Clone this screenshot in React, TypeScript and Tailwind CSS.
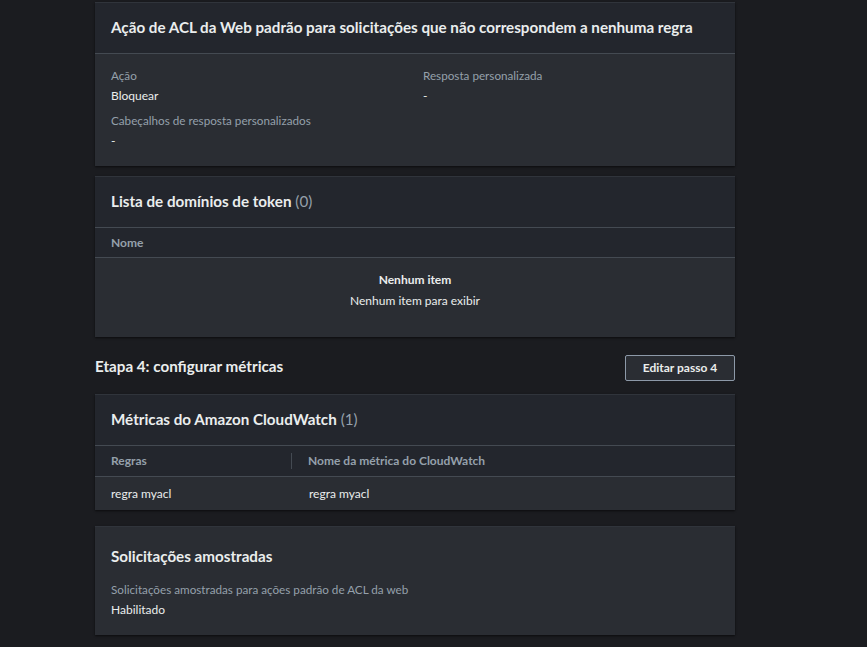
import React from "react";

/* ===============================
   SMALL PIECES
=============================== */
function Card({ children }: { children: React.ReactNode }) {
  return (
    <section className="bg-[#2a2d33] shadow-[0_1px_2px_rgba(0,0,0,0.6)] border-t border-[#30343b]">
      {children}
    </section>
  );
}

function CardHeader({ title, count }: { title: string; count?: number }) {
  return (
    <header className="bg-[#23262d] px-4 h-[51px] flex items-center pb-[2px] border-b border-[#444a52]">
      <h2 className="text-[15.2px] font-bold text-[#eaeded]">
        {title}
        {count !== undefined && (
          <span className="font-normal text-[#95a0ab]"> ({count})</span>
        )}
      </h2>
    </header>
  );
}

function Field({ label, value }: { label: string; value: string }) {
  return (
    <div className="flex flex-col">
      <span className="text-[11.7px] leading-5 text-[#95a0ab]">{label}</span>
      <span className="text-[12px] leading-5 text-[#eaeded] mt-[1px]">{value}</span>
    </div>
  );
}

export default function App() {
  return (
    <main
      className="min-h-screen bg-[#1b1c20] pb-3"
      style={{ fontFamily: 'Lato, "Noto Sans", Arial, sans-serif' }}
    >
      <div className="w-[640px] ml-[95px] pt-[2px] flex flex-col">
        {/* ================= DEFAULT ACTION ================= */}
        <Card>
          <CardHeader title="Ação de ACL da Web padrão para solicitações que não correspondem a nenhuma regra" />
          <div className="px-4 pt-[11px] pb-[15px] grid grid-cols-2 gap-x-4">
            <div className="flex flex-col gap-[4px]">
              <Field label="Ação" value="Bloquear" />
              <Field label="Cabeçalhos de resposta personalizados" value="-" />
            </div>
            <div>
              <Field label="Resposta personalizada" value="-" />
            </div>
          </div>
        </Card>

        {/* ================= TOKEN DOMAINS ================= */}
        <div className="mt-[10px]">
          <Card>
            <CardHeader title="Lista de domínios de token" count={0} />
            <div className="px-4 h-[30px] flex items-center bg-[#23262d] border-b border-[#444a52]">
              <span className="text-[12px] font-bold text-[#95a0ab]">Nome</span>
            </div>
            <div className="flex flex-col items-center pt-[12px] pb-[26px] text-[12px] text-[#eaeded]">
              <span className="font-bold leading-5">Nenhum item</span>
              <span className="leading-5 mt-[1px]">Nenhum item para exibir</span>
            </div>
          </Card>
        </div>

        {/* ================= STEP 4 ================= */}
        <div className="flex items-center justify-between mt-[18px] mb-[13px]">
          <h2 className="text-[15.2px] font-bold text-[#eaeded] pb-[3px]">Etapa 4: configurar métricas</h2>
          <button className="w-[110px] h-[26px] border border-[#8d99a8] rounded-[2px] bg-[#2a2d33] text-[12px] font-bold text-[#eaeded]">
            Editar passo 4
          </button>
        </div>

        <Card>
          <CardHeader title="Métricas do Amazon CloudWatch" count={1} />
          <div className="h-[31px] grid grid-cols-[197px_1fr] items-center bg-[#23262d] border-b border-[#444a52]">
            <span className="px-4 text-[12px] font-bold text-[#95a0ab] border-r border-[#444a52] leading-4">
              Regras
            </span>
            <span className="px-4 text-[12px] font-bold text-[#95a0ab]">
              Nome da métrica do CloudWatch
            </span>
          </div>
          <div className="h-[33px] grid grid-cols-[198px_1fr] items-center text-[12px] text-[#eaeded]">
            <span className="px-4">regra myacl</span>
            <span className="px-4">regra myacl</span>
          </div>
        </Card>

        {/* ================= SAMPLED REQUESTS ================= */}
        <div className="mt-[16px]">
          <Card>
            <div className="px-4 pt-[18px] pb-[15px]">
              <h2 className="text-[15.2px] font-bold text-[#eaeded]">Solicitações amostradas</h2>
              <div className="mt-[11px]">
                <Field
                  label="Solicitações amostradas para ações padrão de ACL da web"
                  value="Habilitado"
                />
              </div>
            </div>
          </Card>
        </div>
      </div>
    </main>
  );
}
